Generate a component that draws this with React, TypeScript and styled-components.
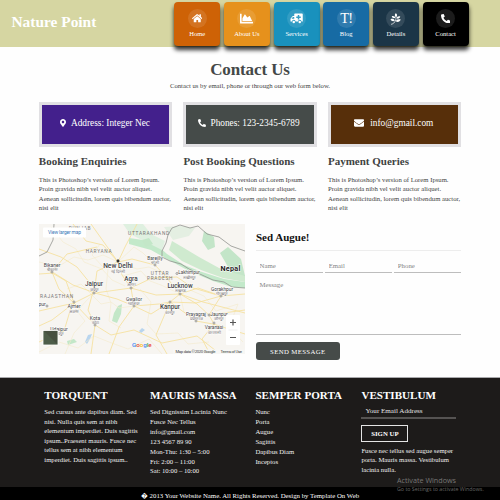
import React from "react";
import styled, { createGlobalStyle } from "styled-components";
import {
  FaHome, FaPhoneAlt, FaEnvelope, FaMapMarkerAlt, FaChartArea,
} from "react-icons/fa";

const GlobalStyle = createGlobalStyle`
  * { box-sizing: border-box; }
  html, body { margin: 0; padding: 0; background: #fefefe; }
  body { width: 500px; height: 500px; overflow: hidden; font-family: "Liberation Serif", "Times New Roman", serif; color: #3f4342; }
  h1, h2, h3, p, ul { margin: 0; padding: 0; }
`;

const Page = styled.div`
  width: 500px;
  height: 500px;
  display: flex;
  flex-direction: column;
  overflow: hidden;
`;

const Header = styled.header`
  height: 47px;
  flex: none;
  display: flex;
  background: #d6d6a2;
  padding: 2px 0 0 11.5px;
`;

const Brand = styled.div`
  width: 162.7px;
  flex: none;
  padding-top: 11px;
  font-size: 15.4px;
  line-height: 18px;
  font-weight: bold;
  color: #fff;
  white-space: nowrap;
`;

const Nav = styled.nav`
  display: flex;
  gap: 3.7px;
`;

const Tile = styled.a<{ $bg: string }>`
  width: 46px;
  height: 43.5px;
  flex: none;
  display: flex;
  flex-direction: column;
  align-items: center;
  padding-top: 7px;
  border-radius: 4px;
  background: ${(p) => p.$bg};
  box-shadow: 0 4px 4px rgba(0, 0, 0, 0.8);
  color: #fff;
  font-size: 6.6px;
  line-height: 8px;
  white-space: nowrap;
`;

const Disc = styled.span`
  width: 19px;
  height: 19px;
  margin-bottom: 2px;
  display: flex;
  align-items: center;
  justify-content: center;
  border-radius: 50%;
  background: rgba(255, 255, 255, 0.11);
  font-size: 10.5px;
`;

const TextGlyph = styled.span`
  font-size: 14.5px;
  line-height: 19px;
  letter-spacing: -0.8px;
`;

const Intro = styled.section`
  height: 55px;
  flex: none;
  padding-top: 11px;
  text-align: center;
`;

const Title = styled.h1`
  font-size: 17px;
  line-height: 23px;
  letter-spacing: -0.1px;
  color: #444847;
`;

const Lead = styled.p`
  margin-top: 1px;
  font-size: 6.7px;
  line-height: 8px;
`;

const Cards = styled.section`
  height: 121px;
  flex: none;
  display: grid;
  grid-template-columns: repeat(3, 133.3px);
  column-gap: 11.3px;
  padding-left: 38.8px;
`;

const Banner = styled.div<{ $bg: string }>`
  height: 45px;
  display: flex;
  align-items: center;
  justify-content: center;
  gap: 4px;
  padding: 0 2px 3px 0;
  border: 3px solid #e1e0e3;
  background: ${(p) => p.$bg};
  color: #fff;
  font-size: 9.3px;
  white-space: nowrap;
  svg { font-size: 8px; flex: none; }
`;

const CardTitle = styled.h2`
  margin-top: 7.5px;
  font-size: 11px;
  line-height: 13px;
  white-space: nowrap;
`;

const CardText = styled.p`
  margin-top: 7px;
  font-size: 6.7px;
  line-height: 9.5px;
  white-space: nowrap;
`;

const Middle = styled.section`
  height: 154px;
  flex: none;
  display: flex;
  gap: 11px;
  padding-left: 39px;
`;

const MapBox = styled.svg`
  width: 206px;
  height: 130px;
  margin-top: 0.5px;
  flex: none;
  display: block;
`;

const Form = styled.form`
  width: 205px;
  display: flex;
  flex-direction: column;
  align-items: flex-start;
`;

const FormTitle = styled.h2`
  width: 100%;
  height: 27.5px;
  padding-top: 8px;
  border-bottom: 1px solid #ededed;
  font-size: 11px;
  line-height: 13px;
  color: #111;
`;

const Fields = styled.div`
  width: 100%;
  height: 22.5px;
  flex: none;
  display: grid;
  grid-template-columns: repeat(3, 1fr);
  gap: 2.5px;
  padding-top: 9.5px;
`;

const Input = styled.input`
  width: 100%;
  min-width: 0;
  height: 13px;
  border: 0;
  border-bottom: 1px solid #bdbdbd;
  padding: 0 0 1px 3.5px;
  background: transparent;
  font: 6.8px "Liberation Serif", serif;
  &::placeholder { color: #858585; opacity: 1; }
`;

const Message = styled.textarea`
  width: 100%;
  height: 62px;
  flex: none;
  border: 0;
  border-bottom: 1px solid #bdbdbd;
  padding: 8px 3.5px;
  background: transparent;
  resize: none;
  font: 6.8px/8px "Liberation Serif", serif;
  &::placeholder { color: #858585; opacity: 1; }
`;

const Send = styled.button`
  width: 83.5px;
  height: 18px;
  margin-top: 7px;
  padding: 0;
  border: 0;
  border-radius: 3px;
  background: #464b49;
  color: #fff;
  font: 6.8px "Liberation Serif", serif;
  letter-spacing: 0.35px;
`;

const Footer = styled.footer`
  height: 110px;
  flex: none;
  display: grid;
  grid-template-columns: 105.7px 105.4px 106px 110px;
  padding: 11px 0 0 44.3px;
  border-top: 1px solid #a9a9ac;
  background: #1d1b1a;
  color: #f2f2f2;
`;

const FootTitle = styled.h3`
  font-size: 11.1px;
  line-height: 13px;
  color: #fff;
  white-space: nowrap;
`;

const FootText = styled.p<{ $leading: number; $top: number }>`
  margin-top: ${(p) => p.$top}px;
  font-size: 6.68px;
  line-height: ${(p) => p.$leading}px;
  white-space: nowrap;
`;

const EmailInput = styled.input`
  display: block;
  width: 95px;
  height: 17px;
  border: 0;
  border-bottom: 2px solid #555352;
  padding: 2px 0 0 4px;
  background: transparent;
  font: 7.1px "Liberation Serif", serif;
  &::placeholder { color: #e4e4e4; opacity: 1; }
`;

const SignUp = styled.button`
  display: block;
  width: 47px;
  height: 17px;
  margin-top: 6px;
  padding: 0;
  border: 1px solid #e4e4e4;
  background: transparent;
  color: #fff;
  font: bold 6.8px "Liberation Serif", serif;
`;

const Copyright = styled.div`
  height: 13px;
  flex: none;
  padding-top: 4px;
  background: #000;
  color: #fff;
  font-size: 6.8px;
  line-height: 9px;
  text-align: center;
  white-space: nowrap;
`;

const Activation = styled.aside`
  position: absolute;
  left: 397px;
  top: 475px;
  color: #777675;
  font: 7.2px/11px "Open Sans", sans-serif;
  white-space: nowrap;
  small { display: block; font-size: 5.3px; line-height: 6px; color: #686766; }
`;

/* Ambulance facing left, with the cross cut out of its body. */
function Ambulance() {
  return (
    <svg width="13" height="11" viewBox="0 0 26 22" fill="currentColor">
      <path
        fillRule="evenodd"
        d="M10 1h14a1.5 1.5 0 0 1 1.500 1.500V17h-2.500a3.500 3.500 0 0 0-7 0h-5a3.500 3.500 0 0 0-7 0H1V11.500L5.500 6H8.500V2.500A1.500 1.500 0 0 1 10 1ZM5.800 8 3 11.500H8.500V8ZM15.500 4V7h-3v3h3v3h3v-3h3V7h-3V4Z"
      />
      <circle cx="7.500" cy="18" r="2.500" />
      <circle cx="19.500" cy="18" r="2.500" />
    </svg>
  );
}

/* Sprig with paired leaves and a stem curving to the lower left. */
function Sprig() {
  return (
    <svg width="11" height="12" viewBox="0 0 22 24" fill="currentColor">
      <path d="M11.500 0.500C15 2.500 15 6 12 8 9 6 9 2.500 11.500 0.500ZM10.500 10C7 11 4 9.500 3.500 6.500 7.500 5.500 10 7 10.500 10ZM13.500 11C13.500 7.500 16.500 6 20.500 7 19.500 10.500 17 12 13.500 11ZM9.500 15.500C6 17.500 2.500 16 1 12.500 5 10.800 8.500 12 9.500 15.500ZM12 17C12 13 16 11.500 21.500 13 20 17 16 19 12 17Z" />
      <path d="M12 6C12.500 13 11 20.500 3 22.500" fill="none" stroke="currentColor" strokeWidth="1.500" strokeLinecap="round" />
    </svg>
  );
}

const tiles = [
  { label: "Home", bg: "#ce6206", icon: <FaHome /> },
  { label: "About Us", bg: "#e6911c", icon: <FaChartArea size={13} /> },
  { label: "Services", bg: "#1991bd", icon: <Ambulance /> },
  { label: "Blog", bg: "#176ba4", icon: <TextGlyph>T!</TextGlyph> },
  { label: "Details", bg: "#1b3547", icon: <Sprig /> },
  { label: "Contact", bg: "#000", icon: <FaPhoneAlt size={9.5} /> },
];

const cards = [
  { bg: "#43208c", icon: <FaMapMarkerAlt />, text: "Address: Integer Nec", title: "Booking Enquiries" },
  { bg: "#454b49", icon: <FaPhoneAlt />, text: "Phones: 123-2345-6789", title: "Post Booking Questions" },
  { bg: "#572f0a", icon: <FaEnvelope size={10} />, text: "\u00a0info@gmail.com", title: "Payment Queries" },
];

type Place = [string, number, number, number, string?];
const cities: Place[] = [
  ["Bikaner", 13, 42.5, 5, "बीकानेर"],
  ["New Delhi", 79, 44, 6.6, "नई दिल्ली"],
  ["Jaipur", 55, 62, 6.3, "जयपुर"],
  ["Agra", 92, 57, 6.3, "आगरा"],
  ["Gwalior", 95, 76.5, 4.8, "ग्वालियर"],
  ["Ajmer", 35, 84, 5, "अजमेर"],
  ["Kota", 56, 95.5, 5, "कोटा"],
  ["Udaipur", 20, 106.5, 5, "उदयपुर"],
  ["Bareilly", 116, 35.5, 4.8, "बरेली"],
  ["Lakhimpur", 150, 50, 4.6, "लखीमपुर"],
  ["Lucknow", 141, 63.5, 6.3, "लखनऊ"],
  ["Kanpur", 131, 85, 6.3, "कानपुर"],
  ["Gorakhpur", 183, 66.5, 4.8, "गोरखपुर"],
  ["Prayagraj", 157, 91.5, 4.8, "प्रयागराज"],
  ["Jaunpur", 180, 91.5, 4.8, "जौनपुर"],
  ["Varanasi", 175, 105, 4.8, "वाराणसी"],
];
const dots = [[13, 48], [79, 37], [55, 69], [92, 64], [95, 82], [35, 78], [56, 101], [8, 82], [116, 41], [138, 49.5], [141, 70], [131, 78], [182, 72], [157, 97], [170, 91], [175, 99]];
const states: Place[] = [
  ["PUNJAB", 41, 5.5, 4.8], ["UTTARAKHAND", 110, 10.5, 4.8], ["HARYANA", 60, 28.5, 4.8],
  ["RAJASTHAN", 18, 73.5, 4.8], ["UTTAR", 121, 50.5, 4.8], ["PRADESH", 121, 55.5, 4.8],
];

const roads = [
  "M0 25 22 33 38 43 55 64 49 86 56 101 52 130",
  "M0 50 15 49 34 61 56 69 92 64 117 71 141 70 164 78 206 89",
  "M34 0 47 17 64 21 79 38 83 51 92 64 95 82 80 103 70 130",
  "M79 38 93 35 116 41 128 54 141 70 131 78 157 97 174 100 206 110",
  "M79 38 58 47 55 69 35 79 13 96 0 102",
  "M0 87 35 79 56 101 72 111 95 106 123 119 158 112 181 130",
  "M92 64 113 54 138 53 154 64 182 72 206 70",
  "M95 82 112 90 131 78 117 111 128 130",
  "M52 0 79 38 86 23 98 0",
  "M0 118 25 107 31 87 35 79 27 57 8 46",
  "M141 70 159 64 182 72 170 91 175 100 163 115 171 130",
  "M56 69 78 75 95 82 120 80 131 78 157 79 182 72",
  "M141 70 158 80 170 91 206 86",
  "M58 23 28 30 13 48 20 65 35 79",
];
const lanes = [
  "M0 38 20 42 35 33 49 36 64 31 79 38 98 45 110 43 121 48",
  "M12 3 24 18 37 25 45 38 63 45 73 56 86 62",
  "M28 65 42 60 62 80 72 78 80 84 95 82",
  "M69 45 67 65 72 79 70 97 82 104",
  "M0 128 20 118 39 124 55 112 70 118 89 125 110 115 123 130",
  "M84 52 102 47 111 57 122 61 141 70 145 88 157 97",
  "M101 65 112 78 108 100 117 110 139 109 149 120 170 118",
  "M151 66 165 72 177 87 199 80 190 103 204 118",
  "M61 20 53 31 64 43 79 38 95 23 104 29 116 41",
  "M26 130 35 109 46 97 38 87 49 75 56 69",
];

function RegionMap() {
  return (
    <MapBox viewBox="0 0 206 130" fontFamily="Roboto, sans-serif">
      <rect width="206" height="130" fill="#f7f5f1" />
      <path d="M90 14 104 16 119 22 128 30 145 41 163 48 185 55 206 58V64L193 63 174 57 150 47 128 35 112 26 90 20Z" fill="#c3e9ca" />
      <path d="M84 0h20l8 10 14 7-3 9-18-9-14-7z" fill="#dff0e0" />
      <path d="m133 17 12 7 15 9 20 11 26 7v7l-22-4-22-8-19-9-13-11z" fill="#cfeacf" />
      <path d="m125 3 17-1 14 2-6 8-16 4z" fill="#e4efe2" />
      <path d="m165 7 10 6 1 10-7 3-6-9zM181 29l8-6 13 12 4 17-14-4z" fill="#c3e5c8" />
      <path d="m75 89 4-7 4-2-1 10-4 9-5-2zM28 117l7-2 3 3-9 3zM103 16l7-2 4 6-7 3z" fill="#c3e7c8" />
      <path d="m46 118 3-7 4-1-2 5-3 5zM100 107l3-3 3 2-4 3z" fill="#b9d5ee" />
      <g fill="none" stroke="#f4ebce" strokeWidth=".65">{lanes.map((d) => <path key={d} d={d} />)}</g>
      <g fill="none" stroke="#f5e09c" strokeWidth=".85" strokeLinejoin="round">{roads.map((d) => <path key={d} d={d} />)}</g>
      <path d="M133 4 129 11 127 19 123 27 123 33 131 37 142 40 150 45 163 51 174 56 185 58 193 63 206 64M133 4l8-3 10 3 8-2 9 8 12 3 12 9 14 5M0 32l8-4 6-12 1-16" fill="none" stroke="#92938f" strokeWidth=".8" />
      <g fill="#777" textAnchor="middle" letterSpacing=".7">
        {states.map(([name, x, y, size]) => <text key={name} x={x} y={y} fontSize={size}>{name}</text>)}
      </g>
      <g fill="#444" stroke="#fff" strokeWidth=".8" paintOrder="stroke" textAnchor="middle">
        {cities.map(([name, x, y, size, local]) => (
          <g key={name} fontWeight={size > 6 ? 500 : 400}>
            <text x={x} y={y} fontSize={size}>{name}</text>
            <text x={x} y={y + 4.6} fontSize="4" fill="#666">{local}</text>
          </g>
        ))}
        <text x="3" y="82" fontSize="5">pur</text>
        <text x="191.5" y="46.5" fontSize="7.2" fontWeight="700" fill="#222" letterSpacing=".3">Nepal</text>
      </g>
      <g fill="#fff" stroke="#666" strokeWidth=".6">{dots.map(([x, y]) => <circle key={`${x}-${y}`} cx={x} cy={y} r="1" />)}</g>
      <circle cx="79" cy="37" r="1.4" fill="#333" />
      <rect x="4" y="3.5" width="43" height="10" rx="1" fill="#fff" />
      <text x="25.5" y="10.3" fontSize="4.9" textAnchor="middle" fill="#3b79b8" textLength="33">View larger map</text>
      <rect x="4" y="106.5" width="15" height="14.5" fill="#4d5d49" stroke="#fff" strokeWidth=".8" />
      <path d="m5 107 13 13V107zM5 120l7-8" fill="#3b3f35" opacity=".4" />
      <rect x="187" y="91" width="14" height="30" rx="1" fill="#fff" />
      <path d="M191 98.5h6M194 95.5v6M191 113.5h6" stroke="#555" strokeWidth="1.2" />
      <path d="M189.5 106h9" stroke="#e4e4e4" strokeWidth=".6" />
      <text x="93" y="122.5" fontSize="6.2" fontWeight="500">
        <tspan fill="#4285f4">G</tspan><tspan fill="#ea4335">o</tspan><tspan fill="#fbbc05">o</tspan><tspan fill="#4285f4">g</tspan><tspan fill="#34a853">l</tspan><tspan fill="#ea4335">e</tspan>
      </text>
      <path d="M134 125.5h72v4.5h-72z" fill="#f7f7f5" />
      <text x="136.5" y="129" fontSize="4.2" textLength="40" fill="#444">Map data ©2020 Google</text>
      <text x="181.5" y="129" fontSize="4.2" textLength="21.5" fill="#444">Terms of Use</text>
    </MapBox>
  );
}

export default function App() {
  return (
    <Page>
      <GlobalStyle />
      <Header>
        <Brand>Nature Point</Brand>
        <Nav>
          {tiles.map((t) => <Tile key={t.label} $bg={t.bg}><Disc>{t.icon}</Disc>{t.label}</Tile>)}
        </Nav>
      </Header>
      <Intro>
        <Title>Contact Us</Title>
        <Lead>Contact us by email, phone or through our web form below.</Lead>
      </Intro>
      <Cards>
        {cards.map((c) => (
          <div key={c.title}>
            <Banner $bg={c.bg}>{c.icon}<span>{c.text}</span></Banner>
            <CardTitle>{c.title}</CardTitle>
            <CardText>
              This is Photoshop’s version of Lorem Ipsum.<br />Proin gravida nibh vel velit auctor aliquet.<br />
              Aenean sollicitudin, lorem quis bibendum auctor,<br />nisi elit
            </CardText>
          </div>
        ))}
      </Cards>
      <Middle>
        <RegionMap />
        <Form>
          <FormTitle>Sed Augue!</FormTitle>
          <Fields>
            <Input placeholder="Name" /><Input placeholder="Email" /><Input placeholder="Phone" />
          </Fields>
          <Message placeholder="Message" />
          <Send type="button">SEND MESSAGE</Send>
        </Form>
      </Middle>
      <Footer>
        <div>
          <FootTitle>TORQUENT</FootTitle>
          <FootText $leading={9.6} $top={5}>
            Sed cursus ante dapibus diam. Sed<br />nisi. Nulla quis sem at nibh<br />elementum imperdiet. Duis sagittis<br />
            ipsum..Praesent mauris. Fusce nec<br />tellus sem at nibh elementum<br />imperdiet. Duis sagittis ipsum..
          </FootText>
        </div>
        <div>
          <FootTitle>MAURIS MASSA</FootTitle>
          <FootText $leading={9.9} $top={5}>
            Sed Dignissim Lacinia Nunc<br />Fusce Nec Tellus<br />info@gmail.com<br />123 4567 89 90<br />
            Mon-Thu: 1:30 – 5:00<br />Fri: 2:00 – 11:00<br />Sat: 10:00 – 10:00
          </FootText>
        </div>
        <div>
          <FootTitle>SEMPER PORTA</FootTitle>
          <FootText $leading={9.9} $top={5}>Nunc<br />Porta<br />Augue<br />Sagittis<br />Dapibus Diam<br />Inceptos</FootText>
        </div>
        <div>
          <FootTitle>VESTIBULUM</FootTitle>
          <EmailInput placeholder="Your Email Address" />
          <SignUp type="button">SIGN UP</SignUp>
          <FootText $leading={9.5} $top={3.5}>Fusce nec tellus sed augue semper<br />porta. Mauris massa. Vestibulum<br />lacinia nulla.</FootText>
        </div>
      </Footer>
      <Copyright>� 2013 Your Website Name. All Rights Reserved. Design by Template On Web</Copyright>
      <Activation>Activate Windows<small>Go to Settings to activate Windows.</small></Activation>
    </Page>
  );
}
